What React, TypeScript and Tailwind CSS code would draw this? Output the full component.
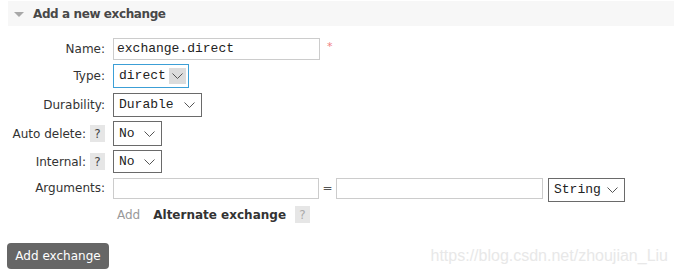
import React from "react";

const Chevron = ({ className = "" }: { className?: string }) => (
  <svg width="11" height="6" viewBox="0 0 11 6" className={className}>
    <polyline points="0.5,0.5 5.5,5.5 10.5,0.5" fill="none" stroke="#555" strokeWidth="1" />
  </svg>
);

const Select = ({ value, w, h }: { value: string; w: string; h: string }) => (
  <div className={`${w} ${h} border border-[#6a6a6a] bg-white flex items-center justify-between pl-[5px] pr-[6px] font-['Liberation_Mono',monospace] text-[13px] text-[#222]`}>
    <span>{value}</span>
    <Chevron />
  </div>
);

const Help = ({ light = false }: { light?: boolean }) => (
  <span className={`inline-flex w-[15px] h-[17px] items-center justify-center bg-[#e6e6e6] text-[12px] ${light ? "text-[#aaa]" : "text-[#444]"}`}>?</span>
);

export default function App() {
  return (
    <div className="w-[674px] h-[273px] bg-white relative overflow-hidden font-['DejaVu_Sans',sans-serif] text-[12px] text-[#333]">
      <div className="ml-[8px] mt-[1px] h-[25px] bg-[#f7f7f7] flex items-center">
        <svg width="10" height="5" viewBox="0 0 10 5" className="ml-[6px] mt-[1px]">
          <polygon points="0,0 10,0 5,5" fill="#a8a8a8" />
        </svg>
        <span className="ml-[9px] font-bold text-[12px] tracking-[-0.4px] text-[#484848]">Add a new exchange</span>
      </div>

      <div className="flex flex-col">
        {/* Name */}
        <div className="flex items-center mt-[12px] h-[22px]">
          <div className="w-[105px] text-right">Name:</div>
          <div className="ml-[8px] w-[207px] h-[22px] border border-[#cccccc] flex items-center pl-[3px] font-['Liberation_Mono',monospace] text-[13px] text-[#222]">exchange.direct</div>
          <span className="ml-[7px] self-start mt-[1px] text-[11px] text-[#f08080]">*</span>
        </div>
        {/* Type */}
        <div className="flex items-center mt-[4px] h-[24px]">
          <div className="w-[105px] text-right">Type:</div>
          <div className="ml-[8px] w-[76px] h-[24px] border border-[#3c9fd6] flex items-center justify-between pl-[5px] pr-[2px] font-['Liberation_Mono',monospace] text-[13px] text-[#222]">
            <span>direct</span>
            <span className="w-[17px] h-[16px] bg-[#dcdcdc] flex items-center justify-center">
              <Chevron />
            </span>
          </div>
        </div>
        {/* Durability */}
        <div className="flex items-center mt-[5px] h-[24px]">
          <div className="w-[105px] text-right">Durability:</div>
          <div className="ml-[8px]"><Select value="Durable" w="w-[89px]" h="h-[24px]" /></div>
        </div>
        {/* Auto delete */}
        <div className="flex items-center mt-[4px] h-[25px]">
          <div className="w-[105px] flex items-center justify-end gap-[4px]">
            <span>Auto delete:</span>
            <Help />
          </div>
          <div className="ml-[8px]"><Select value="No" w="w-[49px]" h="h-[25px]" /></div>
        </div>
        {/* Internal */}
        <div className="flex items-center mt-[4px] h-[23px]">
          <div className="w-[105px] flex items-center justify-end gap-[4px]">
            <span>Internal:</span>
            <Help />
          </div>
          <div className="ml-[8px]"><Select value="No" w="w-[49px]" h="h-[23px]" /></div>
        </div>
        {/* Arguments */}
        <div className="flex items-start mt-[5px] h-[24px]">
          <div className="w-[105px] text-right h-[21px] leading-[21px]">Arguments:</div>
          <div className="ml-[8px] w-[206px] h-[21px] border border-[#cccccc]" />
          <span className="w-[17px] h-[21px] leading-[21px] text-center text-[#555]">=</span>
          <div className="w-[207px] h-[21px] border border-[#cccccc]" />
          <div className="ml-[5px]"><Select value="String" w="w-[77px]" h="h-[24px]" /></div>
        </div>
        {/* Add / Alternate exchange */}
        <div className="flex items-center mt-[4px] h-[17px] pl-[117px]">
          <span className="text-[#999]">Add</span>
          <span className="ml-[13px] font-bold text-[#333]">Alternate exchange</span>
          <span className="ml-[9px]"><Help light /></span>
        </div>
      </div>

      <div className="flex items-start justify-between mt-[20px] pl-[7px] pr-[6px]">
        <button className="w-[102px] h-[26px] rounded-[4px] bg-[#666666] text-white text-[12px] flex items-center justify-center">Add exchange</button>
        <span className="mt-[1px] leading-[24px] font-['Liberation_Sans',sans-serif] text-[16px] text-[#e8e8e8]">https://blog.csdn.net/zhoujian_Liu</span>
      </div>
    </div>
  );
}
